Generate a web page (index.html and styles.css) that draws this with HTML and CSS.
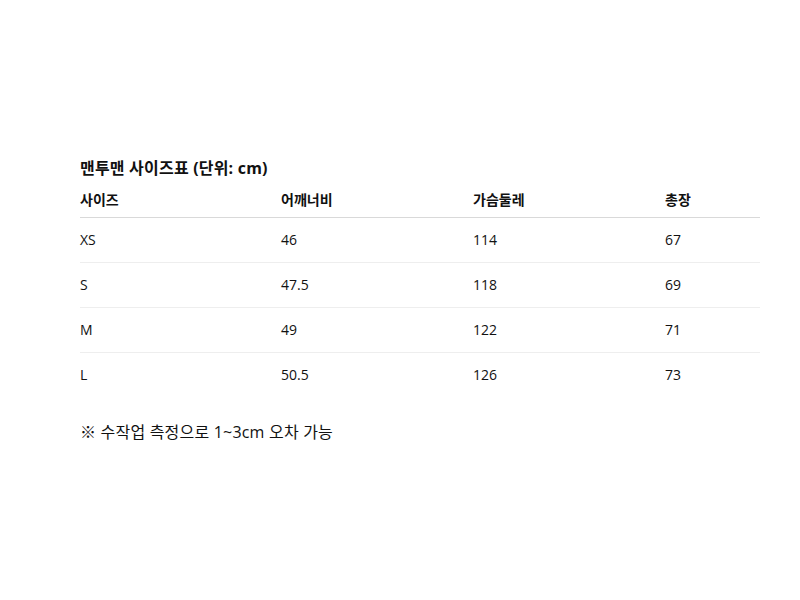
FILE: index.html
```html
<!DOCTYPE html>
<html lang="ko">
<head>
<meta charset="utf-8">
<link rel="stylesheet" href="styles.css">
</head>
<body>
<div class="wrap">
  <h2 class="title">맨투맨 사이즈표 (단위: cm)</h2>
  <table class="size-table">
    <colgroup>
      <col class="c1"><col class="c2"><col class="c3"><col class="c4">
    </colgroup>
    <thead>
      <tr><th>사이즈</th><th>어깨너비</th><th>가슴둘레</th><th>총장</th></tr>
    </thead>
    <tbody>
      <tr><td>XS</td><td>46</td><td>114</td><td>67</td></tr>
      <tr><td>S</td><td>47.5</td><td>118</td><td>69</td></tr>
      <tr><td>M</td><td>49</td><td>122</td><td>71</td></tr>
      <tr><td>L</td><td>50.5</td><td>126</td><td>73</td></tr>
    </tbody>
  </table>
  <p class="note">※ 수작업 측정으로 1~3cm 오차 가능</p>
</div>
</body>
</html>
```
FILE: styles.css
```css
html, body {
  margin: 0;
  padding: 0;
  background: #fff;
}
body {
  font-family: "Segoe UI", "Open Sans", "Noto Sans CJK KR", sans-serif;
  color: #111;
}
.wrap {
  padding: 156px 40px 0 80px;
}
.title {
  margin: 0 0 3px;
  font-size: 16px;
  line-height: 24px;
  font-weight: 700;
  letter-spacing: 0.2px;
}
.size-table {
  width: 680px;
  border-collapse: collapse;
  font-size: 14px;
  table-layout: fixed;
}
.c1 { width: 201px; }
.c2 { width: 192px; }
.c3 { width: 192px; }
.c4 { width: 95px; }
.size-table th {
  text-align: left;
  font-weight: 700;
  padding: 7px 0;
  line-height: 20px;
  border-bottom: 1px solid #d9d9d9;
}
.size-table td {
  padding: 12px 0;
  line-height: 20px;
  border-bottom: 1px solid #eee;
}
.size-table tbody tr:last-child td {
  border-bottom: none;
}
.note {
  margin: 23px 0 0;
  font-size: 16px;
  line-height: 24px;
  letter-spacing: 0.2px;
}
```
